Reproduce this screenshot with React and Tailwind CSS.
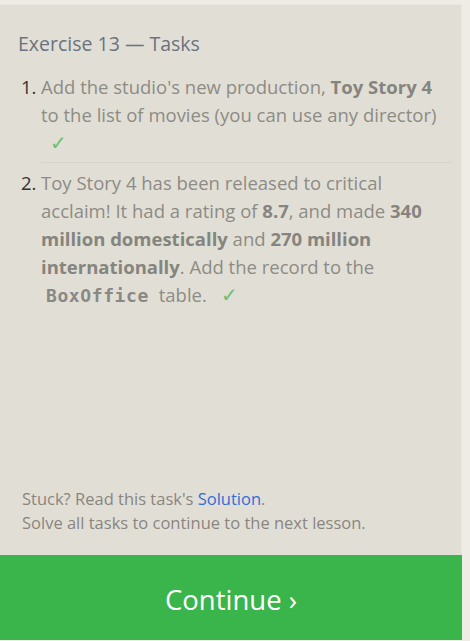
export default function App() {
  return (
    <div className="h-[641px] w-[470px] bg-[#eeece5] pt-[4px] pr-[8px] pb-[1px] font-['Open_Sans','Noto_Sans',sans-serif]">
      <div className="flex h-full flex-col">
        <div className="flex flex-1 flex-col border-r border-t border-[#e8e6de] bg-[#e1dfd5] pl-[18px] pr-[10px]">
          <h2 className="mt-[25px] text-[19.5px] leading-[28px] text-[#6b7280]">Exercise 13 — Tasks</h2>
          <ol className="mt-[15px] text-[18.5px] leading-[28px] text-[#8d8b85]">
            <li className="flex pl-[3px]">
              <span className="w-[20px] shrink-0 text-[#333]">1.</span>
              <div className="min-w-0 flex-1 border-b border-[#d6d4ca] pb-[5px]">
                <p>
                  Add the studio's new production, <b className="text-[#86847e]">Toy Story 4</b> to the list of movies (you can use any director)
                </p>
                <p className="pl-[9px] text-[20px] text-[#6cc070]">✓</p>
              </div>
            </li>
            <li className="flex pl-[3px] pt-[6px]">
              <span className="w-[20px] shrink-0 text-[#333]">2.</span>
              <div className="min-w-0 flex-1">
                Toy Story 4 has been released to critical acclaim! It had a rating of <b className="text-[#86847e]">8.7</b>, and made <b className="text-[#86847e]">340 million domestically</b> and <b className="text-[#86847e]">270 million internationally</b>. Add the record to the <code className="px-[5px] font-['DejaVu_Sans_Mono',monospace] text-[18px] font-bold tracking-[0.6px] text-[#8a8884]">BoxOffice</code> table.
                <span className="ml-[14px] text-[20px] text-[#6cc070]">✓</span>
              </div>
            </li>
          </ol>
          <div className="mt-auto pb-[20px] pl-[4px] text-[16.5px] leading-[24px] text-[#8a8580]">
            <p>Stuck? Read this task's <a className="text-[#2f6fd6]">Solution</a>.</p>
            <p>Solve all tasks to continue to the next lesson.</p>
          </div>
        </div>
        <button className="flex h-[85px] w-full items-center justify-center bg-[#3ab54b] pt-[4px] text-[27.5px] text-white">
          Continue ›
        </button>
      </div>
    </div>
  );
}
